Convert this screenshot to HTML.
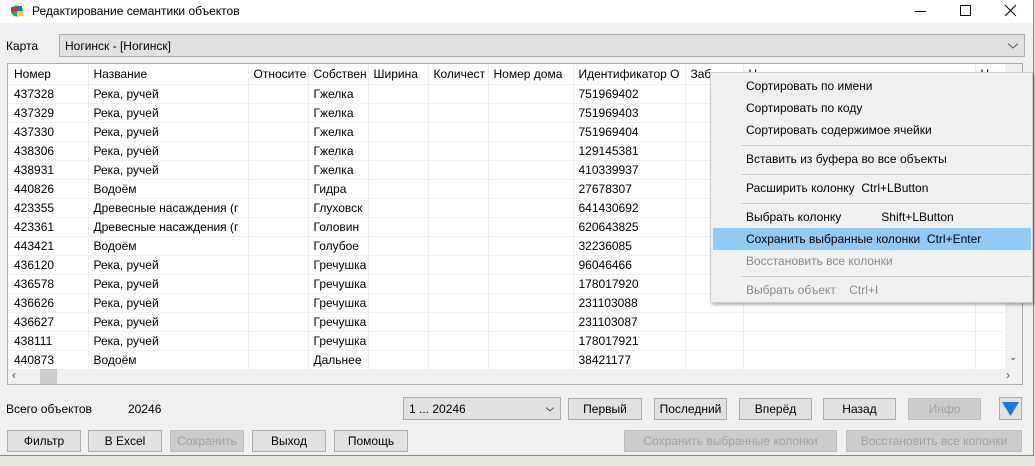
<!DOCTYPE html>
<html><head><meta charset="utf-8"><style>
*{box-sizing:border-box;margin:0;padding:0}
body{width:1035px;height:466px;overflow:hidden;background:#e8e6e0;font-family:"Liberation Sans",sans-serif;font-size:12px;color:#000;position:relative}
.a{position:absolute}
.win{left:0;top:0;width:1034px;height:456px;background:#f0f0f0;border-right:1px solid #888;border-bottom:1px solid #888}
.title{left:0;top:0;width:1033px;height:23px;background:#fff}
.btn{position:absolute;height:22px;background:#e1e1e1;border:1px solid #adadad;text-align:center;line-height:20px}
.dis{color:#a0a0a0;background:#ccc;border-color:#bfbfbf}
table{border-collapse:collapse;table-layout:fixed;position:absolute;left:9px;top:65px}
td{height:19px;border-right:1px solid #f0f0f0;border-bottom:1px solid #f0f0f0;padding-left:5px;white-space:nowrap;overflow:hidden;line-height:18px}
.menu{left:710px;top:72px;width:323px;height:231px;background:#f0f0f0;border:1px solid #ccc;box-shadow:2px 2px 3px rgba(0,0,0,.3)}
.mi{position:absolute;left:2px;width:318px;height:22px;line-height:22px;padding-left:33px;white-space:pre}
.sep{position:absolute;left:30px;width:290px;height:1px;background:#ccc}
</style></head><body>
<div class="a win"></div>
<div class="a title"></div>
<svg class="a" style="left:10px;top:4px" width="14" height="13" viewBox="0 0 14 13"><ellipse cx="7" cy="7" rx="6" ry="5.5" fill="#2a6"/><rect x="1" y="3" width="6" height="5" fill="#c33"/><rect x="7" y="7" width="6" height="5" fill="#fc3"/><rect x="7" y="2" width="5" height="5" fill="#36c"/></svg>
<div class="a" style="left:32px;top:4px">Редактирование семантики объектов</div>
<svg class="a" style="left:915px;top:4px" width="110" height="14"><line x1="0" y1="7.5" x2="11" y2="7.5" stroke="#000"/><rect x="45.5" y="1.5" width="10" height="10" fill="none" stroke="#000"/><path d="M90 1L101 12M101 1L90 12" stroke="#000"/></svg>
<div class="a" style="left:6px;top:39px">Карта</div>
<div class="a" style="left:59px;top:34px;width:966px;height:23px;background:#e1e1e1;border:1px solid #adadad"><span style="position:absolute;left:5px;top:4px">Ногинск - [Ногинск]</span><svg style="position:absolute;right:6px;top:8px" width="10" height="6"><path d="M0 0.5L5 5L10 0.5" fill="none" stroke="#555"/></svg></div>
<div class="a" style="left:7px;top:63px;width:1016px;height:322px;background:#fff;border:1px solid #aaa"></div>
<table>
<colgroup><col style="width:79px"><col style="width:160px"><col style="width:60px"><col style="width:60px"><col style="width:60px"><col style="width:60px"><col style="width:85px"><col style="width:112px"><col style="width:58px"><col style="width:232px"><col style="width:30px"></colgroup>
<tr><td>Номер</td><td>Название</td><td>Относите</td><td>Собствен</td><td>Ширина</td><td>Количест</td><td>Номер дома</td><td>Идентификатор О</td><td>Заб</td><td>Н</td><td>Н</td></tr>
<tr><td>437328</td><td>Река, ручей</td><td></td><td>Гжелка</td><td></td><td></td><td></td><td>751969402</td><td></td><td></td><td></td></tr>
<tr><td>437329</td><td>Река, ручей</td><td></td><td>Гжелка</td><td></td><td></td><td></td><td>751969403</td><td></td><td></td><td></td></tr>
<tr><td>437330</td><td>Река, ручей</td><td></td><td>Гжелка</td><td></td><td></td><td></td><td>751969404</td><td></td><td></td><td></td></tr>
<tr><td>438306</td><td>Река, ручей</td><td></td><td>Гжелка</td><td></td><td></td><td></td><td>129145381</td><td></td><td></td><td></td></tr>
<tr><td>438931</td><td>Река, ручей</td><td></td><td>Гжелка</td><td></td><td></td><td></td><td>410339937</td><td></td><td></td><td></td></tr>
<tr><td>440826</td><td>Водоём</td><td></td><td>Гидра</td><td></td><td></td><td></td><td>27678307</td><td></td><td></td><td></td></tr>
<tr><td>423355</td><td>Древесные насаждения (г</td><td></td><td>Глуховск</td><td></td><td></td><td></td><td>641430692</td><td></td><td></td><td></td></tr>
<tr><td>423361</td><td>Древесные насаждения (г</td><td></td><td>Головин</td><td></td><td></td><td></td><td>620643825</td><td></td><td></td><td></td></tr>
<tr><td>443421</td><td>Водоём</td><td></td><td>Голубое</td><td></td><td></td><td></td><td>32236085</td><td></td><td></td><td></td></tr>
<tr><td>436120</td><td>Река, ручей</td><td></td><td>Гречушка</td><td></td><td></td><td></td><td>96046466</td><td></td><td></td><td></td></tr>
<tr><td>436578</td><td>Река, ручей</td><td></td><td>Гречушка</td><td></td><td></td><td></td><td>178017920</td><td></td><td></td><td></td></tr>
<tr><td>436626</td><td>Река, ручей</td><td></td><td>Гречушка</td><td></td><td></td><td></td><td>231103088</td><td></td><td></td><td></td></tr>
<tr><td>436627</td><td>Река, ручей</td><td></td><td>Гречушка</td><td></td><td></td><td></td><td>231103087</td><td></td><td></td><td></td></tr>
<tr><td>438111</td><td>Река, ручей</td><td></td><td>Гречушка</td><td></td><td></td><td></td><td>178017921</td><td></td><td></td><td></td></tr>
<tr><td>440873</td><td>Водоём</td><td></td><td>Дальнее</td><td></td><td></td><td></td><td>38421177</td><td></td><td></td><td></td></tr>
</table>
<div class="a" style="left:1005px;top:64px;width:17px;height:305px;background:#f0f0f0"></div>
<div class="a" style="left:1009px;top:352px;font-size:10px;color:#555">&#8964;</div>
<div class="a" style="left:8px;top:369px;width:1014px;height:15px;background:#f0f0f0"></div>
<div class="a" style="left:40px;top:369px;width:17px;height:15px;background:#cdcdcd"></div>
<div class="a" style="left:12px;top:368px;color:#555">‹</div>
<div class="a" style="left:1006px;top:368px;color:#555">›</div>
<div class="a" style="left:6px;top:402px">Всего объектов</div>
<div class="a" style="left:128px;top:402px">20246</div>
<div class="a" style="left:403px;top:397px;width:158px;height:23px;background:#e1e1e1;border:1px solid #adadad"><span style="position:absolute;left:5px;top:4px">1 ... 20246</span><svg style="position:absolute;right:6px;top:9px" width="8" height="5"><path d="M0 0.5L4 4L8 0.5" fill="none" stroke="#555"/></svg></div>
<div class="btn" style="left:568px;top:398px;width:74px">Первый</div>
<div class="btn" style="left:654px;top:398px;width:73px">Последний</div>
<div class="btn" style="left:739px;top:398px;width:73px">Вперёд</div>
<div class="btn" style="left:823px;top:398px;width:73px">Назад</div>
<div class="btn dis" style="left:908px;top:398px;width:73px">Инфо</div>
<div class="btn" style="left:999px;top:397px;width:23px;height:23px"><svg width="21" height="21" style="position:absolute;left:0;top:0"><path d="M2 4H19L10.5 18Z" fill="#1a7bd6"/></svg></div>
<div class="btn" style="left:7px;top:430px;width:74px">Фильтр</div>
<div class="btn" style="left:88px;top:430px;width:74px">В Excel</div>
<div class="btn dis" style="left:170px;top:430px;width:74px">Сохранить</div>
<div class="btn" style="left:252px;top:430px;width:74px">Выход</div>
<div class="btn" style="left:334px;top:430px;width:74px">Помощь</div>
<div class="btn dis" style="left:624px;top:430px;width:213px">Сохранить выбранные колонки</div>
<div class="btn dis" style="left:846px;top:430px;width:176px">Восстановить все колонки</div>
<div class="a menu">
<div class="mi" style="top:2px">Сортировать по имени</div>
<div class="mi" style="top:24px">Сортировать по коду</div>
<div class="mi" style="top:46px">Сортировать содержимое ячейки</div>
<div class="sep" style="top:72px"></div>
<div class="mi" style="top:75px">Вставить из буфера во все объекты</div>
<div class="sep" style="top:101px"></div>
<div class="mi" style="top:104px">Расширить колонку  Ctrl+LButton</div>
<div class="sep" style="top:130px"></div>
<div class="mi" style="top:133px">Выбрать колонку            Shift+LButton</div>
<div class="mi" style="top:155px;background:#91c9f7">Сохранить выбранные колонки  Ctrl+Enter</div>
<div class="mi" style="top:177px;color:#8a8a8a">Восстановить все колонки</div>
<div class="sep" style="top:203px"></div>
<div class="mi" style="top:206px;color:#8a8a8a">Выбрать объект    Ctrl+I</div>
</div>
</body></html>
